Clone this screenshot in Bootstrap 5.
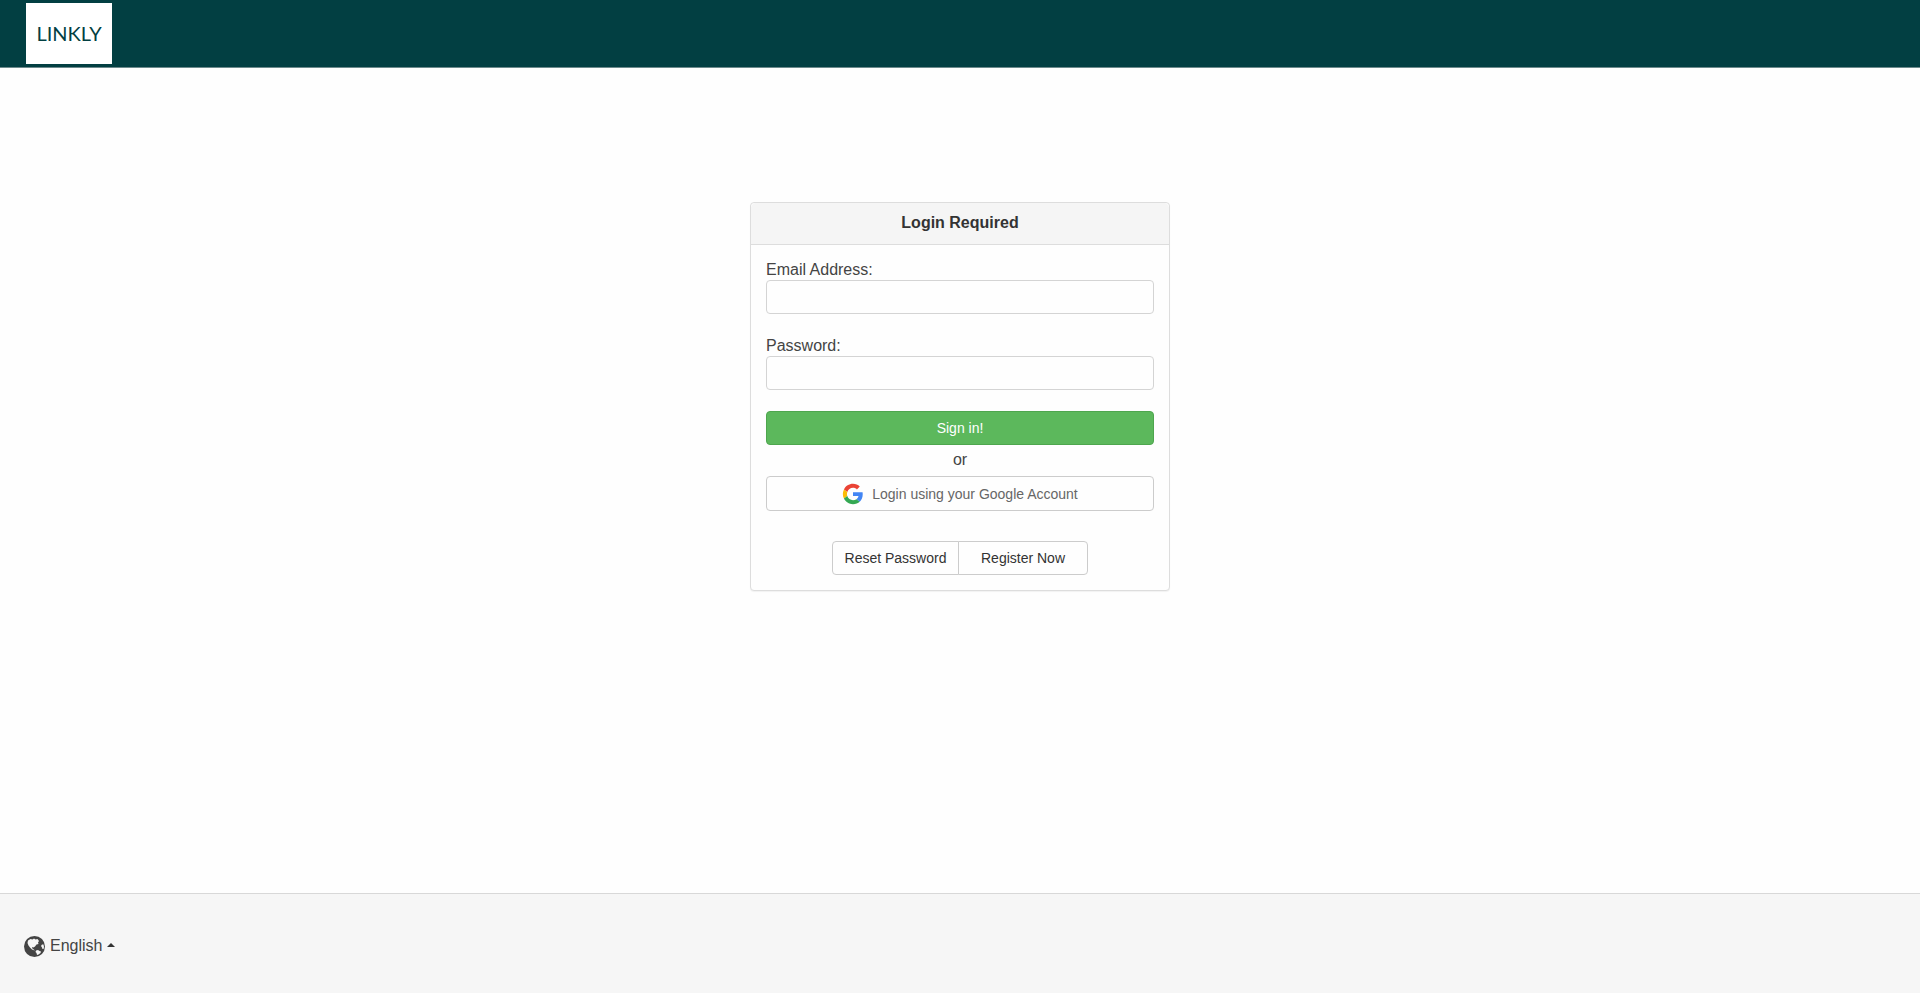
<!DOCTYPE html>
<html lang="en">
<head>
<meta charset="utf-8">
<meta name="viewport" content="width=device-width, initial-scale=1">
<title>Login Required</title>
<link href="https://cdn.jsdelivr.net/npm/bootstrap@5.3.0/dist/css/bootstrap.min.css" rel="stylesheet">
<style>
  body { font: 16px/22px "Liberation Sans", Arial, sans-serif; color: #444; background: #fefefe; }
  .site-header { background: #023f42; border-bottom: 1px solid #6d8a8c; padding: 3px 26px; }
  .brand { width: 86px; height: 61px; background: #fff; color: #023f42; font: 20px/22px Lato, sans-serif; padding-bottom: 2px; }
  .brand:hover { color: #023f42; }
  .login-main { padding: 134px 15px 30px; }
  .login-card { width: 100%; max-width: 420px; border: 1px solid #ddd; border-radius: 4px; box-shadow: 0 1px 1px rgba(0,0,0,.05); background: #fefefe; }
  .login-card .card-header { background: #f5f5f5; border-color: #ddd; padding: 9px 15px 10px; color: #333; }
  .login-card .card-body { padding: 15px; }
  .login-card .form-label { line-height: 20px; }
  .login-card .form-control { height: 34px; border-color: #d4d4d4; border-radius: 4px; font-size: 14px; padding: 6px 12px; background: #fefefe; }
  .login-card .field + .field { margin: 22px 0 21px; }
  .login-card .btn { font-size: 14px; line-height: 20px; padding: 6px 12px; border-radius: 4px; }
  .btn-signin { background: #5cb85c; border-color: #4ea64e; color: #fff; }
  .btn-signin:hover { background: #449d44; color: #fff; }
  .btn-plain { border-color: #ccc; color: #333; background: #fefefe; }
  .btn-plain:hover { background: #e6e6e6; border-color: #adadad; }
  .login-card .btn-google { color: #666; height: 35px; padding: 5px 12px; }
  .divider-text { line-height: 30px; padding-bottom: 1px; }
  .account-links { margin-top: 30px; }
  .login-card .btn-group .btn:first-child { width: 127px; padding: 6px 0; border-radius: 4px 0 0 4px; }
  .login-card .btn-group .btn:last-child { width: 130px; border-radius: 0 4px 4px 0; }
  .site-footer { background: #f6f6f6; border-top: 1px solid #d8d8d8; min-height: 100px; padding: 0 24px; }
  .lang { color: #444; gap: 5px; padding-top: 5px; }
  .lang .caret { width: 0; border: 4px solid transparent; border-top: 0; border-bottom-color: #333; margin-bottom: 3px; }
</style>
</head>
<body class="d-flex flex-column min-vh-100">
<header class="site-header">
  <a href="#" class="brand d-flex align-items-center justify-content-center text-decoration-none">LINKLY</a>
</header>
<main class="login-main flex-grow-1 d-flex justify-content-center align-items-start">
  <form class="card login-card">
    <div class="card-header text-center fw-bold">Login Required</div>
    <div class="card-body">
      <div class="field">
        <label class="form-label d-block mb-0" for="email">Email Address:</label>
        <input class="form-control" type="email" id="email">
      </div>
      <div class="field">
        <label class="form-label d-block mb-0" for="password">Password:</label>
        <input class="form-control" type="password" id="password">
      </div>
      <button class="btn btn-signin w-100 d-block" type="submit">Sign in!</button>
      <div class="divider-text text-center">or</div>
      <button class="btn btn-plain btn-google w-100 d-flex align-items-center justify-content-center gap-2" type="button">
        <svg width="22" height="22" viewBox="-2 -2 52 52" aria-hidden="true">
          <path fill="#EA4335" d="M24 9.5c3.54 0 6.71 1.22 9.21 3.6l6.85-6.85C35.9 2.38 30.47 0 24 0 14.62 0 6.51 5.38 2.56 13.22l7.98 6.19C12.43 13.72 17.74 9.5 24 9.5z"/>
          <path fill="#4285F4" d="M46.98 24.55c0-1.57-.15-3.09-.38-4.55H24v9.02h12.94c-.58 2.96-2.26 5.48-4.78 7.18l7.73 6c4.51-4.18 7.09-10.36 7.09-17.65z"/>
          <path fill="#FBBC05" d="M10.53 28.59c-.48-1.45-.76-2.99-.76-4.59s.27-3.14.76-4.59l-7.98-6.19C.92 16.46 0 20.12 0 24c0 3.88.92 7.54 2.56 10.78l7.97-6.19z"/>
          <path fill="#34A853" d="M24 48c6.48 0 11.93-2.13 15.89-5.81l-7.73-6c-2.15 1.45-4.92 2.3-8.16 2.3-6.26 0-11.57-4.22-13.47-9.91l-7.98 6.19C6.51 42.62 14.62 48 24 48z"/>
        </svg>
        Login using your Google Account
      </button>
      <div class="account-links d-flex justify-content-center">
        <div class="btn-group">
          <a class="btn btn-plain" href="#">Reset Password</a>
          <a class="btn btn-plain" href="#">Register Now</a>
        </div>
      </div>
    </div>
  </form>
</main>
<footer class="site-footer d-flex align-items-center">
  <a class="lang d-inline-flex align-items-center text-decoration-none" href="#" aria-haspopup="true">
    <svg width="21" height="21" viewBox="0 0 42 42" aria-hidden="true">
      <circle cx="21" cy="21" r="21" fill="#444"/>
      <path fill="#f6f6f6" d="M8 9l5-3 4 1 3-2 3 2 4-1 3 4-2 3 1 3-4 1-3 4-3 2-2-1-1 2 2 2 3 2 0 1-5-2-4-4-3-4-2-5z"/>
      <path fill="#f6f6f6" d="M36 17l3 0 1 5-1 4-2 0-1-3-2-3z"/>
      <path fill="#f6f6f6" d="M24 29l4-1 3 2 3 1-1 3-4 3-3 1-1-4-2-2z"/>
    </svg>
    <span>English</span>
    <span class="caret"></span>
  </a>
</footer>
<script src="https://cdn.jsdelivr.net/npm/bootstrap@5.3.0/dist/js/bootstrap.bundle.min.js"></script>
</body>
</html>
